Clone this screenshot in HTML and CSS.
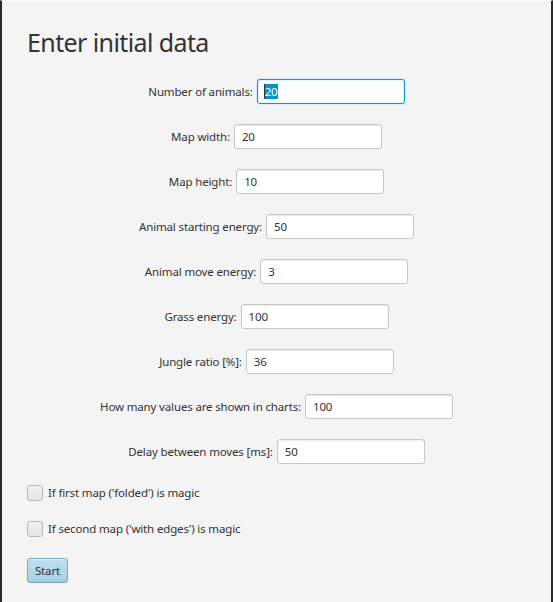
FILE: index.html
```html
<!DOCTYPE html>
<html>
<head>
<meta charset="utf-8">
<link rel="stylesheet" href="styles.css">
</head>
<body>
<div class="window">
  <h1 class="title">Enter initial data</h1>
  <div class="form">
    <div class="row"><label>Number of animals:</label><div class="field focused"><span class="caret"></span><span class="sel">20</span></div></div>
    <div class="row"><label>Map width:</label><div class="field">20</div></div>
    <div class="row"><label>Map height:</label><div class="field">10</div></div>
    <div class="row"><label>Animal starting energy:</label><div class="field">50</div></div>
    <div class="row"><label>Animal move energy:</label><div class="field">3</div></div>
    <div class="row"><label>Grass energy:</label><div class="field">100</div></div>
    <div class="row"><label>Jungle ratio [%]:</label><div class="field">36</div></div>
    <div class="row"><label>How many values are shown in charts:</label><div class="field">100</div></div>
    <div class="row"><label>Delay between moves [ms]:</label><div class="field">50</div></div>
  </div>
  <div class="checks">
    <div class="check"><span class="box"></span><span>If first map ('folded') is magic</span></div>
    <div class="check"><span class="box"></span><span>If second map ('with edges') is magic</span></div>
  </div>
  <button class="start">Start</button>
</div>
</body>
</html>
```
FILE: styles.css
```css
html, body {
  margin: 0;
  padding: 0;
  background: #2a2a2a;
}
body {
  font-family: "Noto Sans", "Open Sans", sans-serif;
  font-size: 11.5px;
  letter-spacing: -0.15px;
  color: #333333;
}
.window {
  box-sizing: border-box;
  width: 553px;
  height: 602px;
  margin: 0;
  border-left: 2px solid #2a2a2a;
  border-right: 2px solid #2a2a2a;
  border-top: 1px solid #f8f8f8;
  background: #f4f4f4;
  padding: 25px 0 0 25px;
}
.title {
  margin: 0;
  font-weight: normal;
  font-size: 25px;
  letter-spacing: -0.6px;
  line-height: 32px;
  color: #333333;
}
.form {
  display: flex;
  flex-direction: column;
  align-items: center;
  gap: 20px;
  margin-top: 21px;
  margin-left: -25px;
}
.row {
  display: flex;
  align-items: center;
  gap: 4px;
  height: 25px;
}
.row label {
  line-height: 16px;
}
.field {
  box-sizing: border-box;
  width: 148px;
  height: 25px;
  background: #ffffff;
  border: 1px solid #c6c6c6;
  border-radius: 3px;
  box-shadow: inset 0 1px 1px #ececec;
  padding: 0 0 0 7px;
  display: flex;
  align-items: center;
  line-height: 16px;
}
.field.focused {
  border: 1px solid #039ed3;
  box-shadow: 0 0 0 1px #d4ecf7, inset 0 0 0 1px #e6f4fb;
  padding-left: 6px;
}
.caret {
  width: 1px;
  height: 15px;
  background: #333333;
}
.sel {
  background: #0096c9;
  color: #ffffff;
  line-height: 15px;
}
.checks {
  display: flex;
  flex-direction: column;
  gap: 20px;
  margin-top: 21px;
}
.check {
  display: flex;
  align-items: center;
  gap: 5px;
  height: 16px;
  line-height: 16px;
}
.box {
  box-sizing: border-box;
  width: 16px;
  height: 16px;
  border: 1px solid #b8b8b8;
  border-radius: 3px;
  background: linear-gradient(#f2f2f2, #e4e4e4);
}
.start {
  display: block;
  box-sizing: border-box;
  margin-top: 21px;
  width: 41px;
  height: 25px;
  padding: 0;
  font-family: inherit;
  font-size: 11.5px;
  letter-spacing: -0.15px;
  color: #333333;
  border: 1px solid #7ea6bb;
  border-radius: 3px;
  background: linear-gradient(#bfe0ef, #a5d0e4);
  box-shadow: inset 0 1px 0 #d6edf7;
}
```
